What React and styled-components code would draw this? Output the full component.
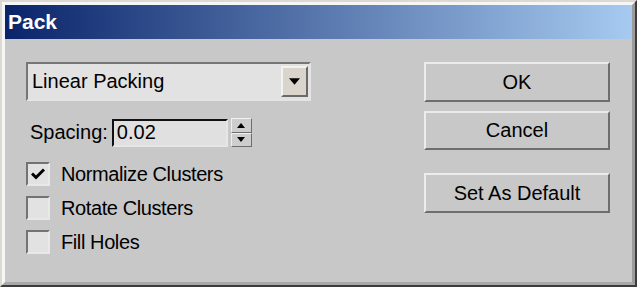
import React from "react";
import styled, { createGlobalStyle } from "styled-components";

const GlobalStyle = createGlobalStyle`
  html, body {
    margin: 0;
    padding: 0;
    background: #c8c8c8;
  }
  * {
    box-sizing: border-box;
  }
`;

const Window = styled.div`
  width: 637px;
  height: 287px;
  border: 2px solid;
  border-color: #dcd9d2 #3c3c3c #3c3c3c #dcd9d2;
  font-family: "Liberation Sans", Arial, sans-serif;
  font-size: 20px;
  color: #000;
`;

const Frame = styled.div`
  height: 100%;
  display: flex;
  flex-direction: column;
  border: 3px solid;
  border-color: #f6f6f6 #9c9c9c #a8a8a8 #f6f6f6;
  background: #c8c8c8;
`;

const TitleBar = styled.div`
  height: 34px;
  flex: none;
  display: flex;
  align-items: center;
  padding-left: 3px;
  background: linear-gradient(to right, #0a246a, #a6caf0);
  color: #fff;
  font-weight: bold;
  font-size: 21px;
`;

const Body = styled.div`
  flex: 1;
  display: flex;
  justify-content: space-between;
  padding: 23px 22px 0 21px;
`;

const LeftColumn = styled.div`
  width: 285px;
  display: flex;
  flex-direction: column;
`;

const RightColumn = styled.div`
  width: 186px;
  display: flex;
  flex-direction: column;
`;

const Dropdown = styled.div`
  height: 39px;
  display: flex;
  align-items: center;
  justify-content: space-between;
  padding: 0 1px 0 4px;
  border: 2px solid;
  border-color: #767676 #e4e4e4 #e4e4e4 #767676;
  background: #e2e2e2;
`;

const ArrowButton = styled.div`
  width: 27px;
  height: 31px;
  display: flex;
  align-items: center;
  justify-content: center;
  border: 2px solid;
  border-color: #f4f2ee #6a6a6a #6a6a6a #f4f2ee;
  background: #d9d5cd;
`;

const SpacingRow = styled.div`
  margin-top: 17px;
  display: flex;
  align-items: center;
  padding-left: 4px;
`;

const Label = styled.span`
  margin-right: 4px;
`;

const NumberField = styled.div`
  width: 116px;
  height: 28px;
  display: flex;
  align-items: center;
  padding-left: 3px;
  border: 2px solid;
  border-color: #111 #e6e6e6 #e6e6e6 #111;
  background: #e0e0e0;
`;

const Spinner = styled.div`
  margin-left: 3px;
  width: 21px;
  height: 29px;
  display: flex;
  flex-direction: column;
`;

const SpinButton = styled.div`
  flex: 1;
  display: flex;
  align-items: center;
  justify-content: center;
  border: 1px solid;
  border-color: #f0f0f0 #6e6e6e #6e6e6e #f0f0f0;
  background: #cdcdcd;
`;

const CheckList = styled.div`
  margin-top: 15px;
  display: flex;
  flex-direction: column;
  gap: 10px;
`;

const CheckRow = styled.label`
  display: flex;
  align-items: center;
  gap: 11px;
  height: 24px;
  letter-spacing: -0.4px;
`;

const Box = styled.span`
  width: 24px;
  height: 24px;
  display: flex;
  align-items: center;
  justify-content: center;
  border: 2px solid;
  border-color: #737373 #e8e8e8 #e8e8e8 #737373;
  background: #e2e2e2;
`;

const Button = styled.div`
  height: ${(p) => p.$h || 40}px;
  margin-top: ${(p) => p.$gap || 0}px;
  display: flex;
  align-items: center;
  justify-content: center;
  border: 2px solid;
  border-color: #ececec #6e6e6e #6e6e6e #ececec;
  background: #c8c8c8;
`;

const Triangle = ({ up, w = 10, h = 6 }) => (
  <svg width={w} height={h} viewBox="0 0 10 6">
    <polygon points={up ? "0,6 10,6 5,0" : "0,0 10,0 5,6"} fill="#000" />
  </svg>
);

const CheckBox = ({ checked, label }) => (
  <CheckRow>
    <Box>
      {checked && (
        <svg width="14" height="12" viewBox="0 0 14 12">
          <polyline
            points="1,5.5 5,9.5 13,1.5"
            fill="none"
            stroke="#000"
            strokeWidth="3"
          />
        </svg>
      )}
    </Box>
    <span>{label}</span>
  </CheckRow>
);

export default function App() {
  return (
    <Window>
      <GlobalStyle />
      <Frame>
        <TitleBar>Pack</TitleBar>
        <Body>
          <LeftColumn>
            <Dropdown>
              <span>Linear Packing</span>
              <ArrowButton>
                <Triangle w={11} h={7} />
              </ArrowButton>
            </Dropdown>
            <SpacingRow>
              <Label>Spacing:</Label>
              <NumberField>0.02</NumberField>
              <Spinner>
                <SpinButton>
                  <Triangle up w={8} h={5} />
                </SpinButton>
                <SpinButton>
                  <Triangle w={8} h={5} />
                </SpinButton>
              </Spinner>
            </SpacingRow>
            <CheckList>
              <CheckBox checked label="Normalize Clusters" />
              <CheckBox label="Rotate Clusters" />
              <CheckBox label="Fill Holes" />
            </CheckList>
          </LeftColumn>
          <RightColumn>
            <Button $h={40}>OK</Button>
            <Button $h={39} $gap={9}>Cancel</Button>
            <Button $h={40} $gap={23}>Set As Default</Button>
          </RightColumn>
        </Body>
      </Frame>
    </Window>
  );
}
